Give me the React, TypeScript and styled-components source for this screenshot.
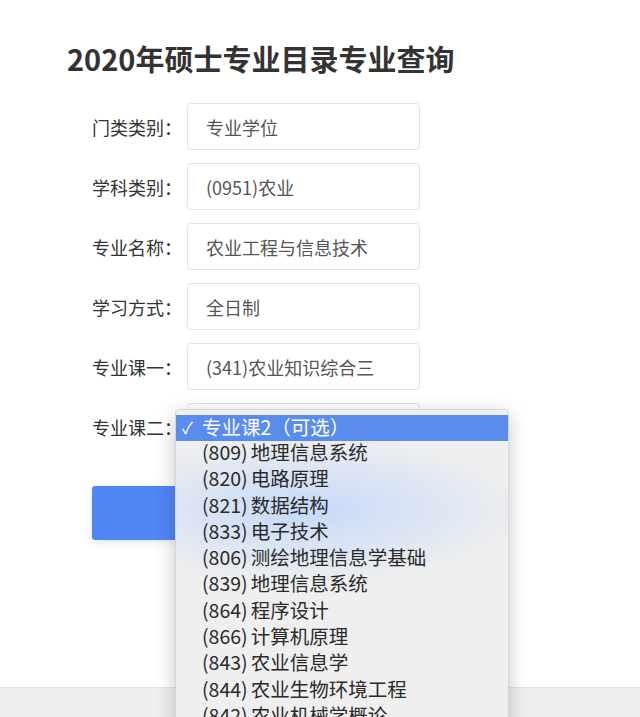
import styled, { createGlobalStyle } from 'styled-components';

const GlobalStyle = createGlobalStyle`
  html, body {
    margin: 0;
    padding: 0;
    background: #fff;
  }
  body {
    font-family: "Noto Sans CJK SC", "Noto Sans", sans-serif;
    color: #333;
  }
`;

const Page = styled.div`
  height: 100vh;
  min-height: 717px;
  display: flex;
  flex-direction: column;
  overflow: hidden;
`;

const Main = styled.main`
  flex: 1;
  padding: 38px 0 0 67px;
`;

const Title = styled.h1`
  margin: 0;
  font-size: 29px;
  line-height: 41px;
  font-weight: 700;
  color: #333;
`;

const Form = styled.form`
  margin: 24px 0 0 25px;
  display: flex;
  flex-direction: column;
  gap: 13px;
`;

const Row = styled.div`
  display: flex;
  align-items: center;
  height: 47px;
`;

const Label = styled.label`
  width: 95px;
  font-size: 18px;
  color: #333;
  white-space: nowrap;
`;

const Field = styled.div`
  position: relative;
  box-sizing: border-box;
  width: 233px;
  height: 47px;
  display: flex;
  align-items: center;
  padding-left: 18px;
  border: 1px solid #e2e2e2;
  border-radius: 4px;
  font-size: 18px;
  color: #555;
  background: #fff;
`;

const SubmitButton = styled.button`
  margin-top: 23px;
  width: 329px;
  height: 54px;
  border: none;
  border-radius: 3px;
  background: #5186f6;
  color: #fff;
  font-family: inherit;
  font-size: 19px;
  box-shadow: 0 3px 10px rgba(81, 134, 246, 0.18);
`;

const Popup = styled.ul`
  position: absolute;
  left: -13px;
  top: 5px;
  z-index: 10;
  width: 334px;
  height: 330px;
  box-sizing: border-box;
  margin: 0;
  padding: 5px 0 0;
  list-style: none;
  border: 1px solid #d6d6d6;
  border-radius: 5px;
  background:
    radial-gradient(ellipse 220px 75px at 130px 100px, rgba(196, 216, 250, 0.95), rgba(236, 240, 246, 0) 100%),
    #efefef;
  box-shadow: 0 6px 20px rgba(0, 0, 0, 0.22);
  overflow: hidden;
`;

const Option = styled.li<{ $active?: boolean }>`
  box-sizing: border-box;
  display: flex;
  align-items: center;
  height: 26.3px;
  padding: 0 0 ${(p) => (p.$active ? 3 : 6)}px 6px;
  font-size: 19.5px;
  color: ${(p) => (p.$active ? '#fff' : '#2a2a2a')};
  background: ${(p) => (p.$active ? '#5a8cee' : 'transparent')};
  white-space: nowrap;
`;

const Check = styled.span`
  width: 20px;
  font-size: 16px;
`;

const Code = styled.span`
  margin-right: 3px;
`;

const Footer = styled.footer`
  height: 29px;
  background: #efefef;
  border-top: 1px solid #e3e3e3;
`;

const fields = [
  { label: '门类类别：', value: '专业学位' },
  { label: '学科类别：', value: '(0951)农业' },
  { label: '专业名称：', value: '农业工程与信息技术' },
  { label: '学习方式：', value: '全日制' },
  { label: '专业课一：', value: '(341)农业知识综合三' },
];

const options = [
  ['(809)', '地理信息系统'],
  ['(820)', '电路原理'],
  ['(821)', '数据结构'],
  ['(833)', '电子技术'],
  ['(806)', '测绘地理信息学基础'],
  ['(839)', '地理信息系统'],
  ['(864)', '程序设计'],
  ['(866)', '计算机原理'],
  ['(843)', '农业信息学'],
  ['(844)', '农业生物环境工程'],
  ['(842)', '农业机械学概论'],
];

export default function App() {
  return (
    <Page>
      <GlobalStyle />
      <Main>
        <Title>2020年硕士专业目录专业查询</Title>
        <Form onSubmit={(e) => e.preventDefault()}>
          {fields.map((f) => (
            <Row key={f.label}>
              <Label>{f.label}</Label>
              <Field>{f.value}</Field>
            </Row>
          ))}
          <Row>
            <Label>专业课二：</Label>
            <Field>
              专业课2（可选）
              <Popup>
                <Option $active>
                  <Check>✓</Check>
                  专业课2（可选）
                </Option>
                {options.map(([code, name]) => (
                  <Option key={code + name}>
                    <Check />
                    <Code>{code}</Code>
                    {name}
                  </Option>
                ))}
              </Popup>
            </Field>
          </Row>
          <SubmitButton type="submit">查询</SubmitButton>
        </Form>
      </Main>
      <Footer />
    </Page>
  );
}
